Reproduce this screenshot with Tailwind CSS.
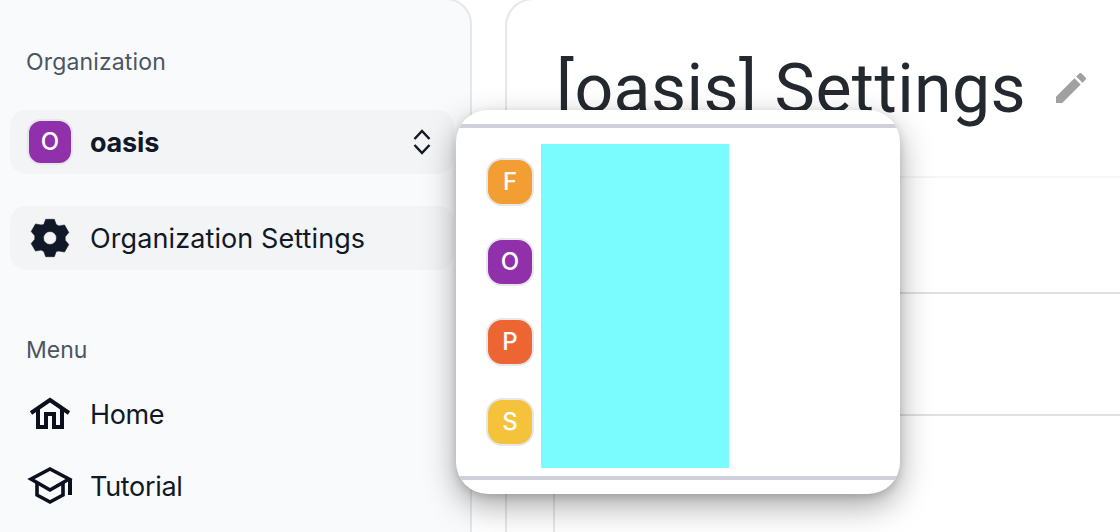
<!DOCTYPE html>
<html lang="en">
<head>
<meta charset="utf-8">
<title>Settings</title>
<script src="https://cdn.jsdelivr.net/npm/@tailwindcss/browser@4"></script>
</head>
<body class="bg-white font-['Inter',sans-serif] overflow-hidden">
<div class="relative flex w-[1120px] h-[532px] overflow-hidden">
  <aside class="w-[472px] h-[540px] -mt-[2px] shrink-0 bg-[#f9fafc] border-r-2 border-t-2 border-[#e5e7eb] rounded-tr-[26px] px-[10px]">
    <div class="pl-4 pt-[47px] text-[23px] leading-[30px] tracking-[0.15px] text-[#4b5563]">Organization</div>
    <div class="mt-[33px] h-[64px] w-[444px] flex items-center rounded-2xl bg-[#f3f4f6] pl-[17px]">
      <div class="w-[46px] h-[46px] rounded-[14px] border-2 border-[#e5e7eb] bg-[#9030aa] text-white text-[24px] font-medium flex items-center justify-center">O</div>
      <span class="ml-[17px] pt-[2px] text-[27px] font-bold tracking-[-0.2px] text-[#111827]">oasis</span>
      <svg class="ml-auto mr-[22px]" width="20" height="28" viewBox="0 0 20 28" fill="none" stroke="#111827" stroke-width="2.5"><path d="M2.5 11 10 3l7.5 8"/><path d="M2.5 17l7.5 8 7.5-8"/></svg>
    </div>
    <div class="mt-[32px] h-[64px] w-[444px] flex items-center rounded-2xl bg-[#f3f4f6] pl-[17px]">
      <svg class="w-[46px] h-[46px] shrink-0" viewBox="0 0 48 48" fill="#111827" stroke="#111827" stroke-width="0.6" stroke-linejoin="round"><path fill-rule="evenodd" d="M19.5 4.5h9l2 5.5 2.87 1.37 5.77-1.02 4.5 7.8-3.77 4.48v3.74l3.77 4.48-4.5 7.8-5.77-1.02L30.5 38l-2 5.5h-9l-2-5.5-2.87-1.37-5.77 1.02-4.5-7.8 3.77-4.48v-3.74l-3.77-4.48 4.5-7.8 5.77 1.02L17.5 10zM24 17.2a6.8 6.8 0 1 0 0 13.6 6.8 6.8 0 0 0 0-13.6z"/></svg>
      <span class="ml-[17px] pt-[2px] text-[27px] tracking-[0.1px] text-[#111827]">Organization Settings</span>
    </div>
    <div class="pl-4 mt-[65px] text-[23px] leading-[30px] text-[#4b5563]">Menu</div>
    <div class="mt-[17px] h-[64px] flex items-center pl-[17px]">
      <svg width="46" height="40" viewBox="0 0 46 40" fill="none" stroke="#0b0f1e" stroke-width="4"><path d="M4 19 23 6l19 13"/><path d="M11 15v18h8V20h8v13h8V15"/></svg>
      <span class="ml-[17px] pt-[2px] text-[27px] tracking-[-0.4px] text-[#111827]">Home</span>
    </div>
    <div class="mt-[8px] h-[64px] flex items-center pl-[17px]">
      <svg width="46" height="40" viewBox="0 0 46 40" fill="none" stroke="#0b0f1e" stroke-width="3.6"><path d="M4 13 23 3l19 10-19 11z"/><path d="M10 17v12l13 7 13-7V17"/><path d="M43 13v16" stroke-width="4"/></svg>
      <span class="ml-[17px] pt-[2px] text-[27px] tracking-[-0.3px] text-[#111827]">Tutorial</span>
    </div>
  </aside>
  <main class="flex-1 pl-[33px]">
    <div class="h-[540px] -mt-[2px] border-l-2 border-t-2 border-[#e5e7eb] rounded-tl-[28px] flex flex-col">
      <div class="h-[176px] pl-[49px] pt-[49px] flex items-start">
        <h1 class="text-[68px] leading-[80px] font-['Roboto',sans-serif] text-[#24292f] tracking-[0.4px]">[oasis] Settings</h1>
        <svg class="w-[40px] h-[40px] ml-[25px] mt-[19px]" viewBox="0 0 24 24" fill="#a0a0a0"><path d="M3 17.25V21h3.75L17.81 9.94l-3.75-3.75L3 17.25zM20.71 7.04c.39-.39.39-1.02 0-1.41l-2.34-2.34c-.39-.39-1.02-.39-1.41 0l-1.83 1.83 3.75 3.75 1.83-1.83z"/></svg>
      </div>
      <div class="ml-[46px] flex-1 border-l-2 border-[#e5e7eb] flex flex-col">
        <div class="h-[2px] bg-[#f5f5f5]"></div>
        <div class="h-[116px] border-b-2 border-[#e0e0e0]"></div>
        <div class="h-[122px] border-b-2 border-[#e0e0e0]"></div>
      </div>
    </div>
  </main>

  <div class="absolute left-[456px] top-[110px] w-[444px] h-[384px] rounded-[32px] bg-white overflow-hidden shadow-[0_12px_32px_rgba(0,0,0,0.34),0_3px_8px_rgba(0,0,0,0.14)] flex flex-col pt-[14px] pb-[14px]">
    <div class="h-[4px] bg-[#cfd0da] shrink-0"></div>
    <div class="flex-1 flex items-stretch pt-[16px] pb-[8px] pl-[30px]">
      <div class="flex flex-col gap-[32px] pt-[14px] w-[48px]">
        <div class="w-[48px] h-[48px] rounded-[16px] border-2 border-[#e5e7eb] bg-[#f29e33] text-white text-[24px] font-medium flex items-center justify-center">F</div>
        <div class="w-[48px] h-[48px] rounded-[16px] border-2 border-[#e5e7eb] bg-[#9030aa] text-white text-[24px] font-medium flex items-center justify-center">O</div>
        <div class="w-[48px] h-[48px] rounded-[16px] border-2 border-[#e5e7eb] bg-[#ec6533] text-white text-[24px] font-medium flex items-center justify-center">P</div>
        <div class="w-[48px] h-[48px] rounded-[16px] border-2 border-[#e5e7eb] bg-[#f5c33b] text-white text-[24px] font-medium flex items-center justify-center">S</div>
      </div>
      <div class="ml-[7px] w-[188px] bg-[#7afcff]"></div>
    </div>
    <div class="h-[4px] bg-[#cfd0da] shrink-0"></div>
  </div>
</div>
</body>
</html>
